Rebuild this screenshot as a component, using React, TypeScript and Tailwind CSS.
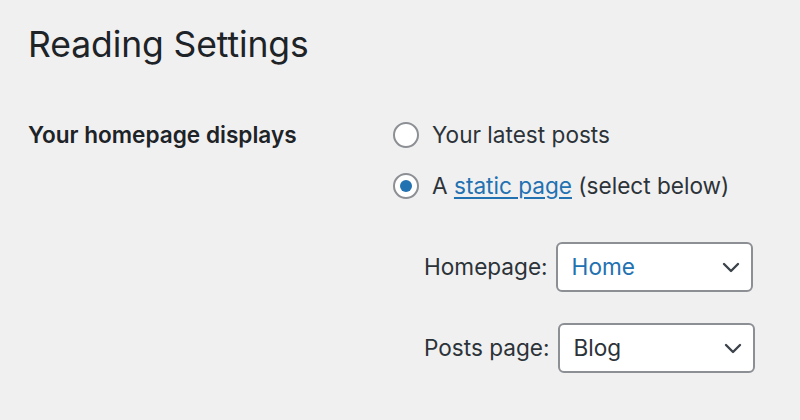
import React from 'react'

const Radio = ({ checked }: { checked?: boolean }) => (
  <span className="flex h-[26px] w-[26px] shrink-0 items-center justify-center rounded-full border-2 border-[#8c8f94] bg-white">
    {checked && <span className="h-[12px] w-[12px] rounded-full bg-[#2271b1]" />}
  </span>
)

const Chevron = () => (
  <svg width="18" height="11" viewBox="0 0 18 11" fill="none">
    <path d="M2 2l7 7 7-7" stroke="#3c434a" strokeWidth="2.4" strokeLinecap="round" strokeLinejoin="round" />
  </svg>
)

const Select = ({ value, blue }: { value: string; blue?: boolean }) => (
  <div className="flex h-[50px] w-[197px] items-center justify-between rounded-[6px] border-2 border-[#8c8f94] bg-white pl-[14px] pr-[11px]">
    <span className={blue ? 'text-[#2271b1]' : 'text-[#2c3338]'}>{value}</span>
    <Chevron />
  </div>
)

export default function App() {
  return (
    <div className="h-[420px] w-[800px] bg-[#f0f0f1] pl-[28px] pt-[23px] font-['Inter',sans-serif] text-[#1d2327]">
      {/* Заголовок */}
      <h1 className="text-[35.5px] font-normal leading-[44px] tracking-[-0.1px]">Reading Settings</h1>

      <div className="mt-[54px] flex">
        <div className="w-[365px] text-[22.6px] font-semibold leading-[28px]">Your homepage displays</div>

        <div className="flex flex-col text-[22.6px] leading-[28px] text-[#2c3338]">
          <label className="flex items-center gap-[13px]">
            <Radio />
            <span>Your latest posts</span>
          </label>
          <label className="mt-[23px] flex items-center gap-[13px]">
            <Radio checked />
            <span>
              A <a href="#" className="text-[#2271b1] underline decoration-[1.5px] underline-offset-[3px]">static page</a> (select below)
            </span>
          </label>

          <div className="mt-[42px] flex flex-col gap-[31px] pl-[31px]">
            <div className="flex items-center gap-[8px]">
              <span>Homepage:</span>
              <Select value="Home" blue />
            </div>
            <div className="flex items-center gap-[8px]">
              <span>Posts page:</span>
              <Select value="Blog" />
            </div>
          </div>
        </div>
      </div>
    </div>
  )
}
